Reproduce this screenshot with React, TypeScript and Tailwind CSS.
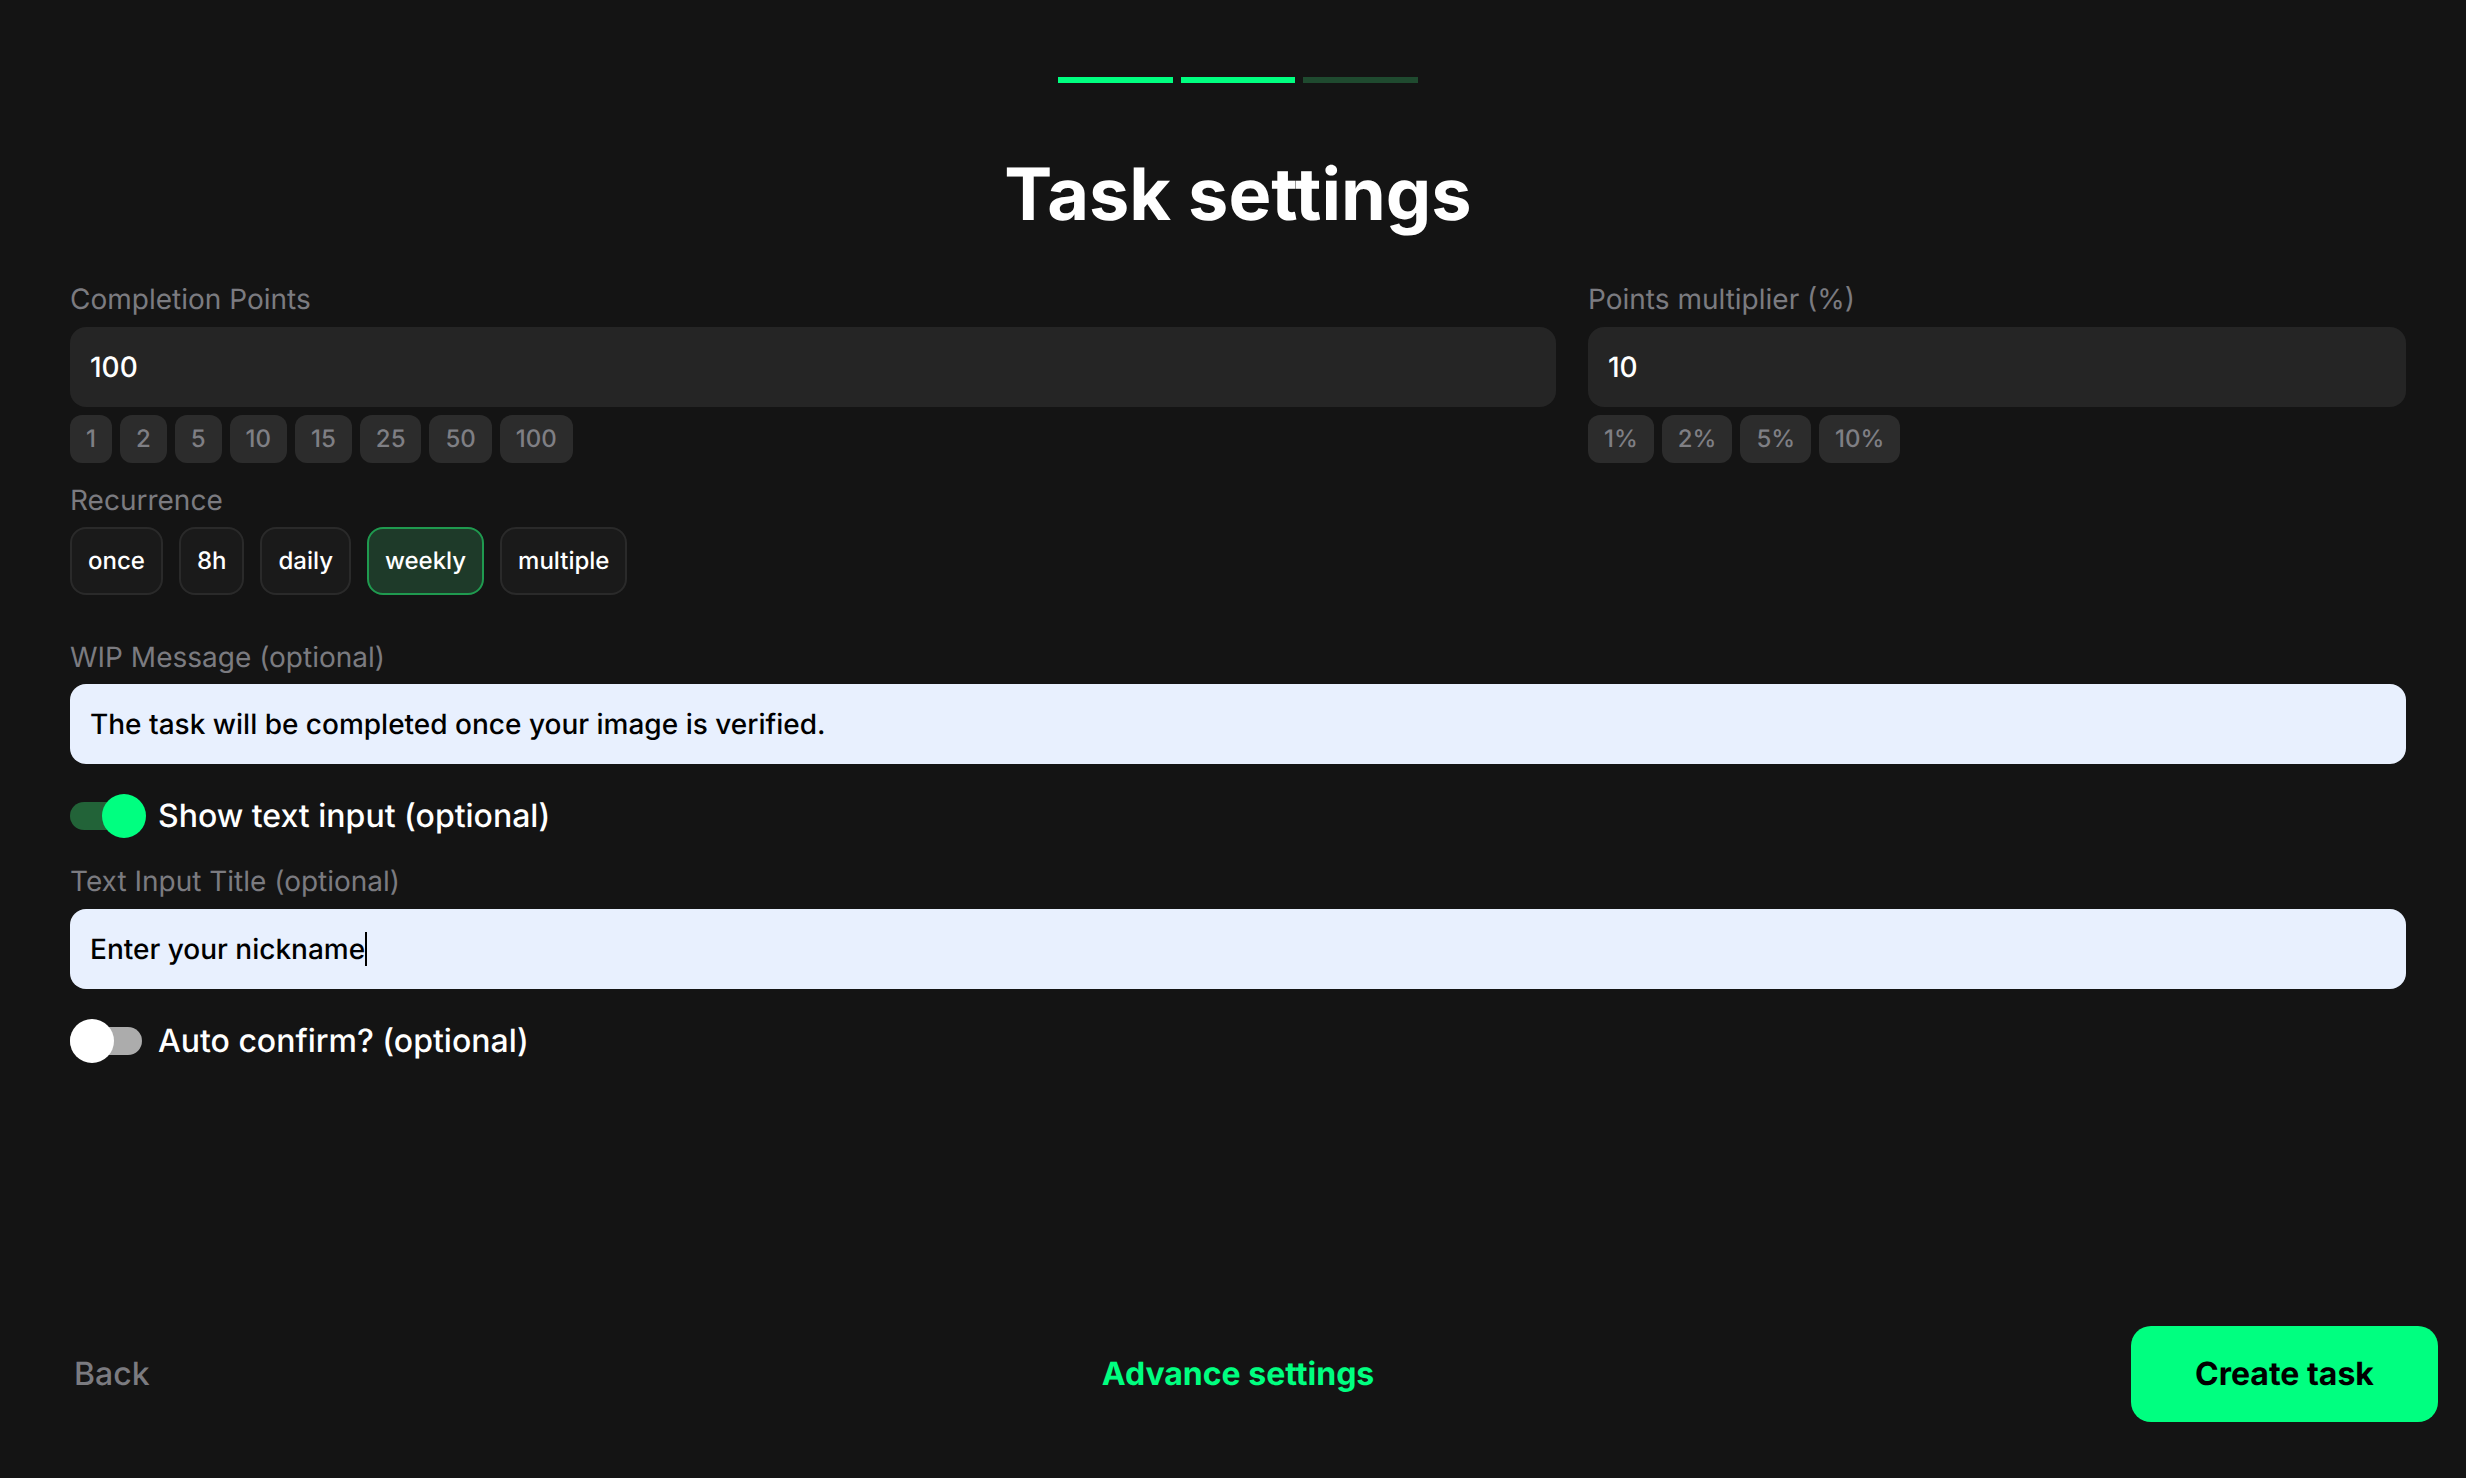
import React from "react";

const font = { fontFamily: '"Inter", "Noto Sans", sans-serif' };

function Label({ children, className = "" }: { children: React.ReactNode; className?: string }) {
  return <div className={`text-[28px] leading-[34px] text-[#7b7b80] ${className}`}>{children}</div>;
}

function DarkInput({ value }: { value: string }) {
  return (
    <div className="h-20 flex items-center rounded-2xl bg-[#252525] pl-5 text-[28px] font-medium text-white">
      {value}
    </div>
  );
}

function LightInput({ value, caret }: { value: string; caret?: boolean }) {
  return (
    <div className="h-20 flex items-center rounded-2xl bg-[#e8f0fe] pl-5 text-[28px] font-medium text-black">
      {value}
      {caret && <span className="w-[2px] h-[34px] bg-black" />}
    </div>
  );
}

function Chip({ children }: { children: React.ReactNode }) {
  return (
    <div className="h-12 px-4 flex items-center rounded-xl bg-[#2c2c2c] text-[24px] font-medium text-[#7f7f84]">
      {children}
    </div>
  );
}

function Rec({ children, active }: { children: React.ReactNode; active?: boolean }) {
  return (
    <div
      className={`h-[68px] px-4 flex items-center rounded-2xl border-2 text-[24px] font-medium text-white ${
        active ? "bg-[#1e3a29] border-[#1f9a4f]" : "bg-[#1a1a1a] border-[#2a2a2a]"
      }`}
    >
      {children}
    </div>
  );
}

function Toggle({ on, children }: { on?: boolean; children: React.ReactNode }) {
  return (
    <div className="flex items-center h-11">
      <div className="relative w-[76px] h-11 flex items-center">
        <div className={`h-7 w-[72px] rounded-full ${on ? "bg-[#226338]" : "bg-[#acacac]"}`} />
        <div
          className={`absolute top-0 w-11 h-11 rounded-full ${on ? "left-8 bg-[#00ff80]" : "left-0 bg-white"}`}
        />
      </div>
      <span className="ml-3 text-[32px] font-medium text-white">{children}</span>
    </div>
  );
}

export default function App() {
  return (
    <div style={font} className="min-h-screen h-[1478px] flex flex-col bg-[#141414] [text-rendering:geometricPrecision]">
      <div className="flex-1 pl-[70px] pr-[60px] pt-[77px]">
        <div className="flex justify-center gap-2">
          <div className="w-[115px] h-1.5 bg-[#00ff80]" />
          <div className="w-[114px] h-1.5 bg-[#00ff80]" />
          <div className="w-[115px] h-1.5 bg-[#1f4a2f]" />
        </div>
        <h1 className="mt-[68px] text-center text-[72px] leading-[88px] font-bold text-white">Task settings</h1>

        <div className="mt-[43px] flex gap-8">
          <div className="w-[1486px]">
            <Label className="mb-[11px]">Completion Points</Label>
            <DarkInput value="100" />
            <div className="mt-2 flex gap-2">
              {["1", "2", "5", "10", "15", "25", "50", "100"].map((v) => (
                <Chip key={v}>{v}</Chip>
              ))}
            </div>
          </div>
          <div className="flex-1">
            <Label className="mb-[11px]">Points multiplier (%)</Label>
            <DarkInput value="10" />
            <div className="mt-2 flex gap-2">
              {["1%", "2%", "5%", "10%"].map((v) => (
                <Chip key={v}>{v}</Chip>
              ))}
            </div>
          </div>
        </div>

        <Label className="mt-5 mb-[10px]">Recurrence</Label>
        <div className="flex gap-4">
          <Rec>once</Rec>
          <Rec>8h</Rec>
          <Rec>daily</Rec>
          <Rec active>weekly</Rec>
          <Rec>multiple</Rec>
        </div>

        <Label className="mt-[45px] mb-[10px]">WIP Message (optional)</Label>
        <LightInput value="The task will be completed once your image is verified." />

        <div className="mt-[30px]">
          <Toggle on>Show text input (optional)</Toggle>
        </div>

        <Label className="mt-[26px] mb-[11px]">Text Input Title (optional)</Label>
        <LightInput value="Enter your nickname" caret />

        <div className="mt-[30px]">
          <Toggle>Auto confirm? (optional)</Toggle>
        </div>
      </div>

      <div className="pl-[38px] pr-[28px] pb-[56px] grid grid-cols-[1fr_auto_1fr] items-center">
        <div className="pl-[36px] text-[32px] font-medium text-[#7b7b80]">Back</div>
        <div className="text-[32px] font-bold text-[#00ff80]">Advance settings</div>
        <div className="justify-self-end w-[307px] h-24 rounded-[20px] bg-[#00ff80] flex items-center justify-center text-[32px] font-bold text-black">
          Create task
        </div>
      </div>
    </div>
  );
}
